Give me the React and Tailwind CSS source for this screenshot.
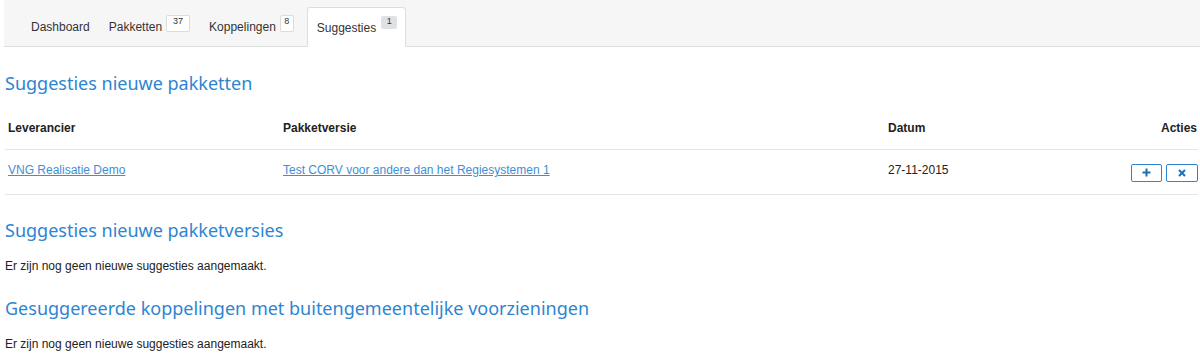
import React from 'react'

const TABS = [
  { label: 'Dashboard' },
  { label: 'Pakketten', count: 37, badge: 'w-[24px]' },
  { label: 'Koppelingen', count: 8, badge: 'w-[14px]' },
  { label: 'Suggesties', count: 1, active: true },
]

function Tab({ label, count, badge, active }) {
  if (active) {
    return (
      <div className="flex items-center h-[40px] ml-[4px] pl-[9px] pr-[8px] bg-white border border-[#dddddd] border-b-white rounded-t-[3px] -mb-px">
        <span className="text-[12px] text-[#333] mt-[2px]">{label}</span>
        <span className="ml-[5px] -mt-[10px] w-[16px] h-[13px] flex items-center justify-center text-[9px] text-[#333] bg-[#dfe1e5] rounded-[2px]">{count}</span>
      </div>
    )
  }
  return (
    <div className="flex items-center h-[40px] px-[9px]">
      <span className="text-[12px] text-[#333] mt-[2px]">{label}</span>
      {count != null && (
        <span className={`${badge} ml-[4px] -mt-[6px] h-[17px] flex items-center justify-center pb-[3px] text-[9px] text-[#333] bg-white border border-[#dcdcdc] rounded-[2px]`}>{count}</span>
      )}
    </div>
  )
}

function Heading({ children }) {
  return (
    <h2 className="text-[18px] leading-[24px] text-[#2d85d2] font-['Noto_Sans',sans-serif]">{children}</h2>
  )
}

export default function App() {
  return (
    <div className="w-[1200px] h-[354px] bg-white font-['Liberation_Sans',Arial,sans-serif] text-[12px] text-[#222] overflow-hidden">
      {/* tabs */}
      <div className="ml-[4px] h-[47px] bg-[#f6f6f6] border-b border-[#dddddd] flex items-end pl-[18px]">
        <div className="flex items-end">
          {TABS.map((t) => (
            <div key={t.label} className={t.label === 'Pakketten' || t.label === 'Koppelingen' ? 'ml-[1px]' : ''}>
              <Tab {...t} />
            </div>
          ))}
        </div>
      </div>

      <div className="px-[5px]">
        <div className="mt-[24px]">
          <Heading>Suggesties nieuwe pakketten</Heading>
        </div>

        <table className="w-[1193px] mt-[13px] border-collapse">
          <thead>
            <tr className="border-b border-[#e3e6e8] h-[41px]">
              <th className="text-left font-bold pl-[3px] w-[278px]">Leverancier</th>
              <th className="text-left font-bold w-[605px]">Pakketversie</th>
              <th className="text-left font-bold">Datum</th>
              <th className="text-right font-bold pr-[1px]">Acties</th>
            </tr>
          </thead>
          <tbody>
            <tr className="border-b border-[#e3e6e8] h-[45px]">
              <td className="pl-[3px] pb-[3px]">
                <a className="text-[#3d8fd6] underline" href="#">VNG Realisatie Demo</a>
              </td>
              <td className="pb-[3px]">
                <a className="text-[#3d8fd6] underline" href="#">Test CORV voor andere dan het Regiesystemen 1</a>
              </td>
              <td className="pb-[3px]">27-11-2015</td>
              <td>
                <div className="flex justify-end gap-[4px] mt-[2px]">
                  <button className="w-[31px] h-[18px] border border-[#2d85d2] rounded-[2px] flex items-center justify-center bg-white">
                    <svg width="9" height="9" viewBox="0 0 9 9"><path d="M4.5 0.5v8M0.5 4.5h8" stroke="#1f6fb8" strokeWidth="2" /></svg>
                  </button>
                  <button className="w-[32px] h-[18px] border border-[#2d85d2] rounded-[2px] flex items-center justify-center bg-white">
                    <svg width="8" height="8" viewBox="0 0 8 8"><path d="M1 1l6 6M7 1L1 7" stroke="#1f6fb8" strokeWidth="2" /></svg>
                  </button>
                </div>
              </td>
            </tr>
          </tbody>
        </table>

        <div className="mt-[23px]">
          <Heading>Suggesties nieuwe pakketversies</Heading>
        </div>
        <p className="mt-[15px]">Er zijn nog geen nieuwe suggesties aangemaakt.</p>

        <div className="mt-[21px]">
          <Heading>Gesuggereerde koppelingen met buitengemeentelijke voorzieningen</Heading>
        </div>
        <p className="mt-[15px]">Er zijn nog geen nieuwe suggesties aangemaakt.</p>
      </div>
    </div>
  )
}
